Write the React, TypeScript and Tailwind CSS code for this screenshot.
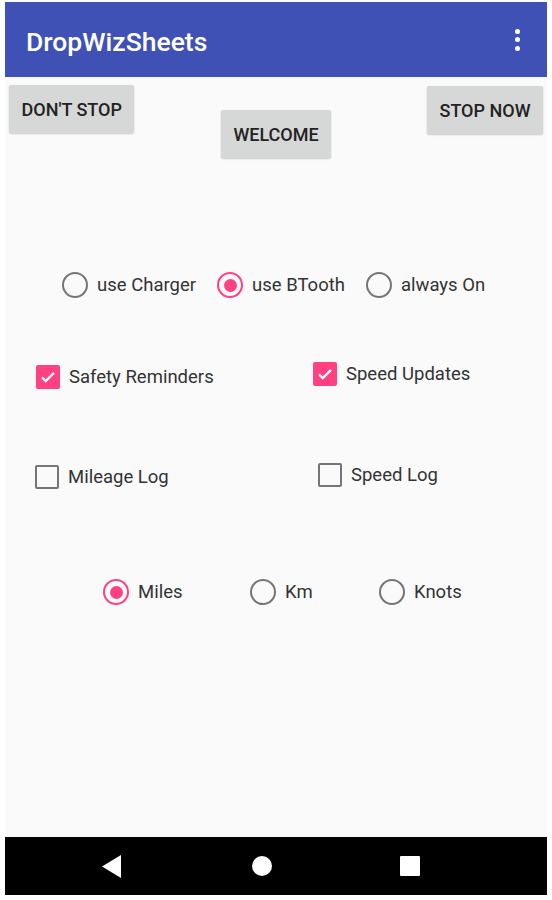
import React from 'react';

function Radio({ checked, label }: { checked?: boolean; label: string }) {
  return (
    <div className="flex items-center gap-[9px]">
      <span
        className={
          'flex items-center justify-center w-[26px] h-[26px] rounded-full border-[2px] ' +
          (checked ? 'border-[#FF4081]' : 'border-[#757575]')
        }
      >
        {checked && <span className="w-[13px] h-[13px] rounded-full bg-[#FF4081]" />}
      </span>
      <span className="text-[18.5px] text-[#333] leading-none">{label}</span>
    </div>
  );
}

function Check({ checked, label }: { checked?: boolean; label: string }) {
  return (
    <div className="flex items-center gap-[9px]">
      {checked ? (
        <span className="flex items-center justify-center w-[24px] h-[24px] rounded-[2px] bg-[#FF4081]">
          <svg width="18" height="18" viewBox="0 0 24 24">
            <path d="M4 12.5l5 5L20 6.5" fill="none" stroke="white" strokeWidth="3" />
          </svg>
        </span>
      ) : (
        <span className="w-[24px] h-[24px] rounded-[2px] border-[2px] border-[#757575]" />
      )}
      <span className="text-[18.5px] text-[#333] leading-none">{label}</span>
    </div>
  );
}

function Btn({ children }: { children: React.ReactNode }) {
  return (
    <button className="h-[48px] px-[12.5px] bg-[#D6D7D7] rounded-[2px] shadow-[0_1px_2px_rgba(0,0,0,0.2)] text-[18px] font-medium text-[#222] uppercase">
      {children}
    </button>
  );
}

export default function App() {
  return (
    <div
      className="w-[552px] h-[900px] bg-white pt-[2px] px-[5px] pb-[5px]"
      style={{ fontFamily: 'Roboto, "Noto Sans", sans-serif' }}
    >
      <div className="flex flex-col h-full bg-[#FAFAFA]">
        {/* app bar */}
        <div className="h-[75px] bg-[#3F51B5] flex items-center justify-between pl-[21px] pr-[27px] pt-[4px] shrink-0">
          <span className="text-[26.5px] font-medium text-white">DropWizSheets</span>
          <div className="flex flex-col gap-[3.5px] -mt-[4px]">
            <span className="w-[5px] h-[5px] rounded-full bg-white" />
            <span className="w-[5px] h-[5px] rounded-full bg-white" />
            <span className="w-[5px] h-[5px] rounded-full bg-white" />
          </div>
        </div>

        {/* buttons */}
        <div className="flex items-start mt-[8px] px-[4px]">
          <div className="flex-1 flex">
            <Btn>Don't Stop</Btn>
          </div>
          <div className="mt-[25px]">
            <Btn>Welcome</Btn>
          </div>
          <div className="flex-1 flex justify-end mt-[1px]">
            <Btn>Stop Now</Btn>
          </div>
        </div>

        {/* power source */}
        <div className="flex items-center gap-[21px] mt-[114px] ml-[57px]">
          <Radio label="use Charger" />
          <Radio checked label="use BTooth" />
          <Radio label="always On" />
        </div>

        {/* options */}
        <div className="flex items-start mt-[64px]">
          <div className="ml-[31px] mt-[3px] w-[277px]">
            <Check checked label="Safety Reminders" />
          </div>
          <Check checked label="Speed Updates" />
        </div>
        <div className="flex items-start mt-[74px]">
          <div className="ml-[30px] mt-[2px] w-[283px]">
            <Check label="Mileage Log" />
          </div>
          <Check label="Speed Log" />
        </div>

        {/* units */}
        <div className="flex items-center mt-[90px] ml-[98px]">
          <div className="w-[147px]">
            <Radio checked label="Miles" />
          </div>
          <div className="w-[129px]">
            <Radio label="Km" />
          </div>
          <Radio label="Knots" />
        </div>

        <div className="flex-1" />

        {/* nav bar */}
        <div className="h-[58px] bg-black flex items-center shrink-0">
          <div className="ml-[97px]">
            <svg width="19" height="23" viewBox="0 0 19 23">
              <path d="M19 0V23L0 11.5Z" fill="white" />
            </svg>
          </div>
          <span className="ml-[131px] w-[20px] h-[20px] rounded-full bg-white" />
          <span className="ml-[128px] w-[20px] h-[20px] rounded-[1px] bg-white" />
        </div>
      </div>
    </div>
  );
}
